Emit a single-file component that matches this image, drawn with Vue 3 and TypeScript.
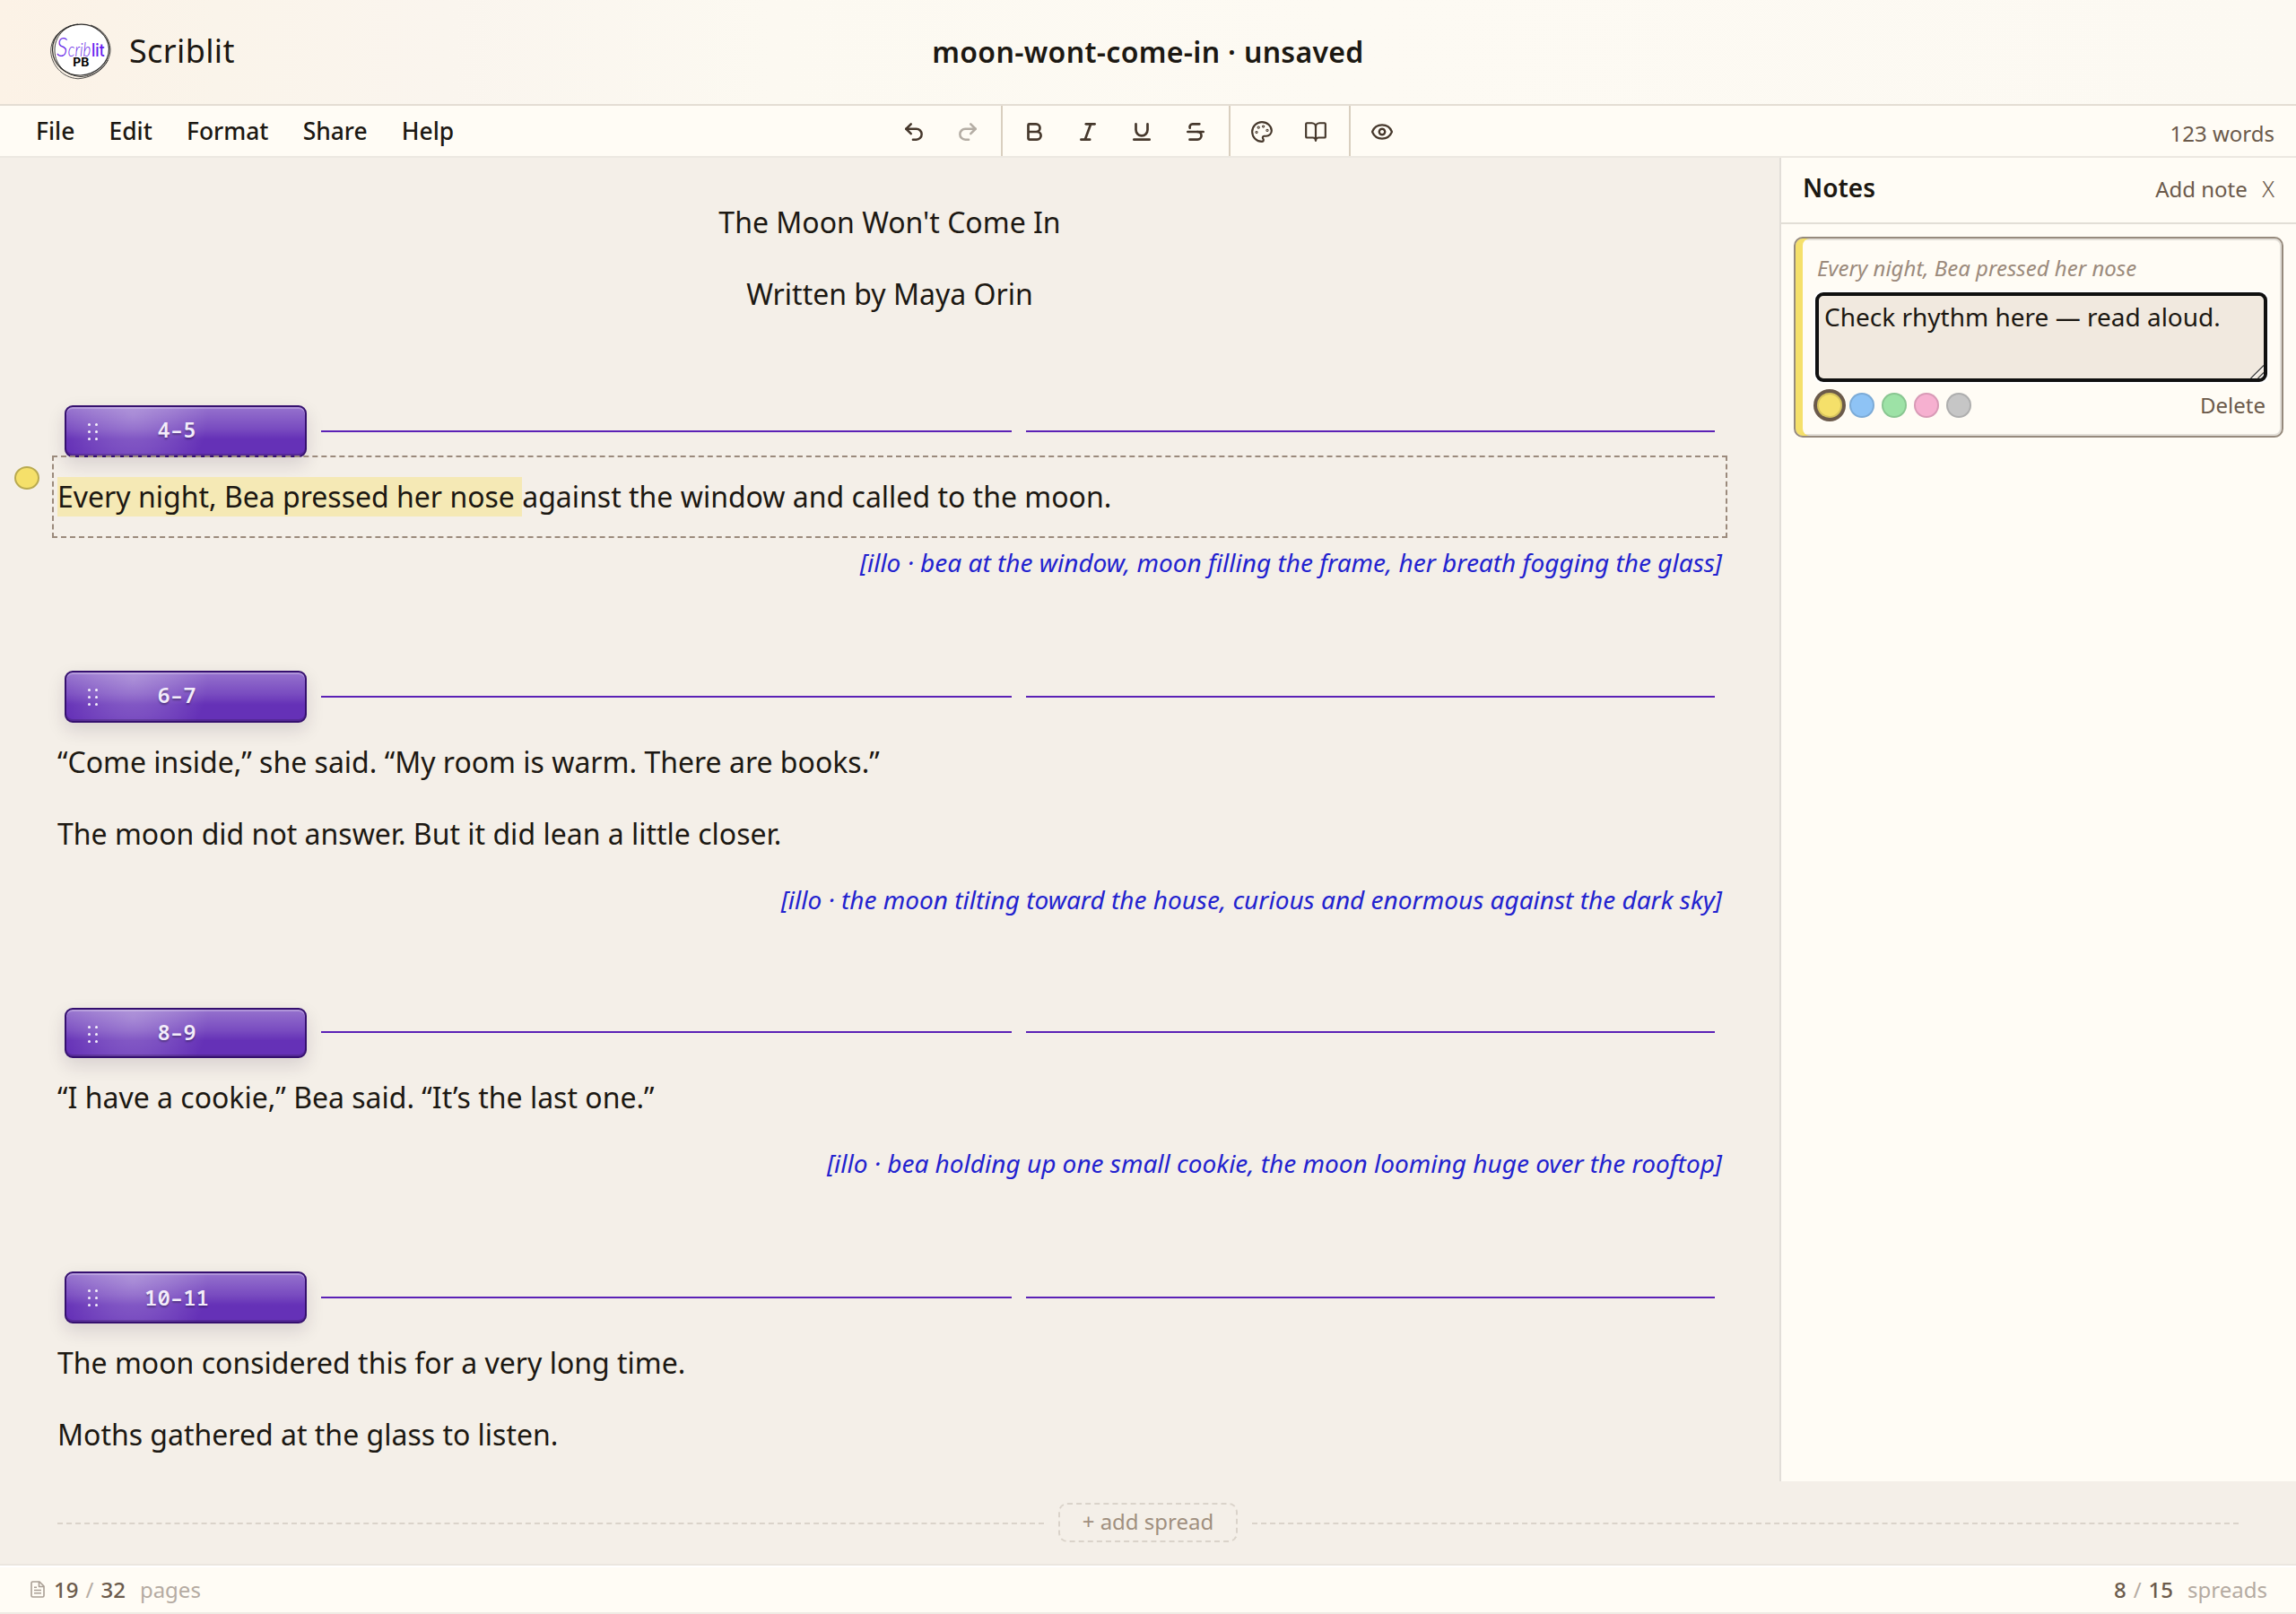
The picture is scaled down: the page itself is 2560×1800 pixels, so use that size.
<script setup lang="ts">
interface Spread {
  pages: string
  kind: string
  paragraphs: { mark?: string; text: string; active?: boolean }[]
  illo?: string
}

const menus: string[] = ['File', 'Edit', 'Format', 'Share', 'Help']

const tools = [
  {
    weight: 2.3,
    items: [
      { name: 'Undo', off: false, paths: ['M9 14 4 9l5-5', 'M4 9h10.5a5.5 5.5 0 0 1 0 11H11'] },
      { name: 'Redo', off: true, paths: ['m15 14 5-5-5-5', 'M20 9H9.5a5.5 5.5 0 0 0 0 11H13'] },
    ],
  },
  {
    weight: 2.5,
    items: [
      { name: 'Bold', off: false, paths: ['M6 12h9a4 4 0 0 1 0 8H7a1 1 0 0 1-1-1V5a1 1 0 0 1 1-1h7a4 4 0 0 1 0 8'] },
      { name: 'Italic', off: false, paths: ['M19 4h-9', 'M14 20H5', 'M15 4 9 20'] },
      { name: 'Underline', off: false, paths: ['M6 4v6a6 6 0 0 0 12 0V4', 'M4 20h16'] },
      { name: 'Strikethrough', off: false, paths: ['M16 4H9a3 3 0 0 0-2.83 4', 'M14 12a4 4 0 0 1 0 8H6', 'M4 12h16'] },
    ],
  },
  {
    weight: 2,
    items: [
      {
        name: 'Theme',
        off: false,
        paths: [
          'M12 2C6.5 2 2 6.5 2 12s4.5 10 10 10c.926 0 1.648-.746 1.648-1.688 0-.437-.18-.835-.437-1.125-.29-.289-.438-.652-.438-1.125a1.64 1.64 0 0 1 1.668-1.668h1.996c3.051 0 5.555-2.503 5.555-5.554C21.965 6.012 17.461 2 12 2z',
          'M13.5 6a.5.5 0 1 0 .01 0zM17.5 10a.5.5 0 1 0 .01 0zM8.5 7a.5.5 0 1 0 .01 0zM6.5 12a.5.5 0 1 0 .01 0z',
        ],
      },
      {
        name: 'Book view',
        off: false,
        paths: [
          'M12 7v14',
          'M3 18a1 1 0 0 1-1-1V4a1 1 0 0 1 1-1h5a4 4 0 0 1 4 4 4 4 0 0 1 4-4h5a1 1 0 0 1 1 1v13a1 1 0 0 1-1 1h-6a3 3 0 0 0-3 3 3 3 0 0 0-3-3z',
        ],
      },
    ],
  },
  {
    weight: 2.2,
    items: [
      {
        name: 'Preview',
        off: false,
        paths: [
          'M2.062 12.348a1 1 0 0 1 0-.696 10.75 10.75 0 0 1 19.876 0 1 1 0 0 1 0 .696 10.75 10.75 0 0 1-19.876 0',
          'M12 9a3 3 0 1 0 .01 0z',
        ],
      },
    ],
  },
]

const spreads: Spread[] = [
  {
    pages: '4–5',
    kind: 'single',
    paragraphs: [
      {
        mark: 'Every night, Bea pressed her nose ',
        text: 'against the window and called to the moon.',
        active: true,
      },
    ],
    illo: '[illo · bea at the window, moon filling the frame, her breath fogging the glass]',
  },
  {
    pages: '6–7',
    kind: 'double',
    paragraphs: [
      { text: '“Come inside,” she said. “My room is warm. There are books.”' },
      { text: 'The moon did not answer. But it did lean a little closer.' },
    ],
    illo: '[illo · the moon tilting toward the house, curious and enormous against the dark sky]',
  },
  {
    pages: '8–9',
    kind: 'single tight',
    paragraphs: [{ text: '“I have a cookie,” Bea said. “It’s the last one.”' }],
    illo: '[illo · bea holding up one small cookie, the moon looming huge over the rooftop]',
  },
  {
    pages: '10–11',
    kind: 'last',
    paragraphs: [
      { text: 'The moon considered this for a very long time.' },
      { text: 'Moths gathered at the glass to listen.' },
    ],
  },
]

const swatches: string[] = ['yellow', 'blue', 'green', 'pink', 'gray']
</script>

<template>
  <div class="app">
    <header class="top">
      <div class="brand">
        <svg class="logo" viewBox="0 0 72 66" width="72" height="66">
          <ellipse cx="37.8" cy="32" rx="30.5" ry="28" fill="#fff" />
          <g fill="none" stroke="#2b2b2b">
            <path stroke-width="1.2" d="M38 3.2C54 3.500 68 15.500 68.500 30.500 68.500 47 54 59 37 60 20 60.500 6 48 5.500 32 5 16 19 3 38 3.200Z" />
            <path stroke-width=".9" d="M34 3C20 4.500 7.500 16 8 33 8.500 49 21 60.500 37 61.500 55 61 70 47 70 31 69.500 19 61 8 48 4" />
            <path stroke-width=".8" d="M26 5C12 10 3.200 20 3.700 34 4.500 47 15 62.500 34 63.800 47 63 61 56 67.500 43" />
          </g>
          <text class="cap" x="10" y="38.500" textLength="12.500" lengthAdjust="spacingAndGlyphs">S</text>
          <text class="script" x="22.800" y="38.500" textLength="25.500" lengthAdjust="spacingAndGlyphs">crib</text>
          <text class="lit" x="49" y="38.500" textLength="14.500" lengthAdjust="spacingAndGlyphs">lit</text>
          <text class="pb" x="28.300" y="50" textLength="18" lengthAdjust="spacingAndGlyphs">PB</text>
        </svg>
        <span class="name">Scriblit</span>
      </div>
      <h1 class="doc-title">moon-wont-come-in · unsaved</h1>
      <div class="top-end"></div>
    </header>

    <nav class="bar">
      <div class="menus">
        <span v-for="m in menus" :key="m">{{ m }}</span>
      </div>
      <div class="tools">
        <div v-for="(group, i) in tools" :key="i" class="group">
          <span v-for="t in group.items" :key="t.name" class="tool" :class="{ off: t.off }">
            <svg viewBox="0 0 24 24" width="26" height="26" :stroke-width="group.weight">
              <path v-for="p in t.paths" :key="p" :d="p" />
            </svg>
          </span>
        </div>
      </div>
      <div class="count">123 words</div>
    </nav>

    <div class="body">
      <main class="editor">
        <p class="front">The Moon Won't Come In</p>
        <p class="front">Written by Maya Orin</p>
        <section v-for="s in spreads" :key="s.pages" class="spread" :class="s.kind">
          <div class="divider">
            <div class="pill">
              <span class="grip"><i v-for="n in 6" :key="n"></i></span>
              <span class="pages">{{ s.pages }}</span>
            </div>
            <span class="rule"></span>
            <span class="rule end"></span>
          </div>
          <div v-for="p in s.paragraphs" :key="p.text" class="para" :class="{ active: p.active }">
            <span v-if="p.active" class="note-dot"></span>
            <p><mark v-if="p.mark">{{ p.mark }}</mark>{{ p.text }}</p>
          </div>
          <p v-if="s.illo" class="illo">{{ s.illo }}</p>
        </section>
      </main>

      <aside class="notes">
        <div class="notes-head">
          <h2>Notes</h2>
          <span class="add">Add note</span>
          <span class="close">X</span>
        </div>
        <div class="card">
          <div class="quote">Every night, Bea pressed her nose</div>
          <div class="field">
            Check rhythm here — read aloud.
            <svg class="handle" width="15" height="15" viewBox="0 0 15 15">
              <path d="M2 15 15 2M10 15l5-5" fill="none" stroke="#fff" stroke-width="2.500" opacity=".6" />
              <path d="M.5 15 15 .5M8.500 15 15 8.500" fill="none" stroke="#444" stroke-width="1.300" />
            </svg>
          </div>
          <div class="card-foot">
            <span v-for="(c, i) in swatches" :key="c" class="swatch" :class="[c, { on: i === 0 }]"></span>
            <span class="delete">Delete</span>
          </div>
        </div>
      </aside>
    </div>

    <div class="add-row">
      <span class="dash"></span>
      <span class="add-spread">+ add spread</span>
      <span class="dash"></span>
    </div>

    <footer class="status">
      <svg class="doc" viewBox="0 0 16 19" width="16" height="19">
        <path d="M10 1H2.500A1.500 1.500 0 0 0 1 2.500v14A1.500 1.500 0 0 0 2.500 18h11a1.500 1.500 0 0 0 1.500-1.500V6zM9.500 1v5.500H15M4 7.200h3M4 10.500h8M4 13.800h8" />
      </svg>
      <b>19</b><span class="slash">/</span><b>32</b><span class="unit">pages</span>
      <span class="grow"></span>
      <b>8</b><span class="slash">/</span><b>15</b><span class="unit">spreads</span>
    </footer>
  </div>
</template>

<style>
body {
  background: #f4efe8;
}
</style>

<style scoped>
* {
  box-sizing: border-box;
}
p, h1, h2 {
  margin: 0;
}
.app {
  width: 2560px;
  height: 1800px;
  display: flex;
  flex-direction: column;
  overflow: hidden;
  background: #f4efe8;
  color: #1c1812;
  font-family: "Noto Sans", "Liberation Sans", sans-serif;
}
.top {
  height: 118px;
  flex: none;
  display: grid;
  grid-template-columns: 1fr auto 1fr;
  align-items: center;
  border-bottom: 2px solid #e4ddd3;
  background: linear-gradient(90deg, #fcf2e6 0, #faf4ea 240px, #faf5ee 500px, #fcf9f1 860px, #fdfaf3 1500px, #fcf9f2 100%);
}
.brand {
  display: flex;
  align-items: center;
  padding: 0 0 2px 53px;
}
.logo {
  margin-right: 19px;
}
.cap {
  font: italic 300 30px Lato, sans-serif;
  fill: #6a2be8;
}
.script {
  font: italic 300 22px Lato, sans-serif;
  fill: #6a2be8;
}
.lit {
  font: 500 20px Inter, sans-serif;
  fill: #6420f0;
}
.pb {
  font: 700 12.5px Inter, sans-serif;
  fill: #050505;
}
.name {
  font-size: 36px;
  line-height: 50px;
  letter-spacing: 0.01em;
}
.doc-title {
  font-size: 32px;
  font-weight: 600;
  line-height: 44px;
  letter-spacing: 0.01em;
}
.bar {
  height: 58px;
  flex: none;
  display: grid;
  grid-template-columns: 989px auto 1fr;
  grid-template-rows: 56px;
  border-bottom: 2px solid #ece8e1;
  background: #fffcf5;
}
.menus {
  display: flex;
  align-items: center;
  padding-left: 40px;
  gap: 38.2px;
  font-size: 26.4px;
  font-weight: 500;
  line-height: 56px;
}
.tools {
  display: flex;
}
.group {
  display: flex;
  padding: 0 7px 0 5px;
  border-right: 2px solid #d9cfbf;
}
.group:first-child {
  padding-left: 0;
}
.group:last-child {
  border-right: 0;
}
.tool {
  width: 60px;
  display: flex;
  align-items: center;
  justify-content: center;
  padding-top: 2px;
}
.tool svg {
  fill: none;
  stroke: #46382c;
  stroke-linecap: round;
  stroke-linejoin: round;
}
.tool.off {
  opacity: 0.4;
}
.count {
  text-align: right;
  padding-right: 24px;
  font-size: 24px;
  line-height: 61px;
  color: #6b5a4b;
}
.body {
  height: 1476px;
  flex: none;
  display: flex;
}
.editor {
  width: 1984px;
  flex: none;
  padding: 32px 64px 0;
  overflow: hidden;
}
.front {
  height: 80px;
  font-size: 32px;
  line-height: 79px;
  text-align: center;
}
.spread {
  height: 296px;
  margin: 0 -6px;
}
.front + .spread {
  margin-top: 84px;
}
.spread.double {
  height: 374px;
}
.divider {
  height: 58px;
  display: flex;
  align-items: center;
  gap: 16px;
  padding: 0 14px;
}
.pill {
  width: 270px;
  height: 58px;
  display: flex;
  align-items: flex-start;
  padding-left: 24px;
  border: 2px solid #35106f;
  border-radius: 9px;
  background:
    radial-gradient(circle at 28% 16%, rgba(255, 255, 255, 0.26), rgba(255, 255, 255, 0.14) 42px, rgba(255, 255, 255, 0) 84px),
    linear-gradient(180deg, rgba(255, 255, 255, 0.34), rgba(255, 255, 255, 0.16) 45%, rgba(255, 255, 255, 0.04) 66%, rgba(255, 255, 255, 0.04)),
    #5f29b4;
  box-shadow:
    inset 0 2px 0 rgba(255, 255, 255, 0.25),
    inset 0 -2px 0 rgba(40, 20, 60, 0.25),
    0 8px 20px rgba(40, 20, 60, 0.14);
}
.tight .pill {
  height: 56px;
  margin-top: 2px;
}
.grip {
  width: 12px;
  margin-top: 18px;
  display: grid;
  grid-template-columns: 3px 3px;
  gap: 5px;
}
.grip i {
  width: 3px;
  height: 3px;
  border-radius: 50%;
  background: rgba(255, 255, 255, 0.92);
}
.pages {
  width: 174px;
  text-align: center;
  font: 600 24px/49px "Noto Sans Mono", "DejaVu Sans Mono", monospace;
  color: #f3edfa;
  text-shadow: 0 2px 2px rgba(0, 0, 0, 0.3);
}
.last .pages {
  padding-top: 2px;
}
.rule {
  flex: 1;
  height: 2px;
  background: #5b21b6;
}
.rule.end {
  flex: 0 0 768px;
}
.para {
  height: 80px;
  padding: 0 6px;
  font-size: 32px;
  line-height: 79px;
  position: relative;
}
.divider + .para {
  margin-top: 4px;
}
.divider + .para.active {
  height: 92px;
  margin-top: -2px;
  border: 2px dashed #9b8a7c;
  padding: 0 4px;
  line-height: 87px;
}
.note-dot {
  position: absolute;
  left: -44px;
  top: 10px;
  width: 28px;
  height: 26px;
  border: 2px solid #b9aa50;
  border-radius: 50%;
  background: #f5e06a;
}
mark {
  padding-bottom: 1px;
  background: #f5e9b5;
  color: inherit;
}
.illo {
  padding-right: 6px;
  text-align: right;
  font-size: 28px;
  font-style: italic;
  line-height: 66px;
  color: #2222cf;
}
.active + .illo {
  line-height: 54px;
}
.notes {
  flex: 1;
  border-left: 2px solid #e2ded8;
  background: #fffcf5;
}
.notes-head {
  height: 74px;
  display: flex;
  align-items: flex-start;
  padding: 0 24px;
  border-bottom: 2px solid #e2ded6;
  font-size: 24px;
  line-height: 69px;
  color: #6b5a4b;
}
.notes-head h2 {
  flex: 1;
  font-size: 28px;
  font-weight: 600;
  line-height: 66px;
  color: #1c1812;
}
.close {
  margin-left: 16.5px;
  font-size: 25px;
  font-weight: 300;
}
.card {
  width: 546px;
  height: 224px;
  margin: 14px 0 0 14px;
  padding: 12px 16px 0 22px;
  border: 2px solid #968a7d;
  border-radius: 10px;
  box-shadow: inset 8px 0 0 #f5e06a, inset 0 0 0 2px #e3dfd8;
}
.quote {
  padding-left: 2px;
  font-size: 24px;
  font-style: italic;
  line-height: 42px;
  color: #9b8a7c;
}
.field {
  height: 100px;
  margin-top: 6px;
  padding: 5px 6px;
  border: 4px solid #101010;
  border-radius: 9px;
  box-shadow: 0 0 0 2px #fff;
  background: #f1e9df;
  font-size: 28px;
  line-height: 36px;
  position: relative;
}
.handle {
  position: absolute;
  right: 0;
  bottom: 0;
}
.card-foot {
  display: flex;
  align-items: center;
  gap: 8px;
  height: 52px;
  padding: 0 2px;
}
.swatch {
  width: 28px;
  height: 28px;
  border: 2px solid rgba(0, 0, 0, 0.12);
  border-radius: 50%;
}
.swatch.on {
  box-shadow: 0 0 0 4px #6b5a4b;
}
.yellow { background: #f5e06a; }
.blue { background: #8ec3f5; }
.green { background: #9de2a6; }
.pink { background: #f6b0d0; }
.gray { background: #c6c6c6; }
.delete {
  margin-left: auto;
  font-size: 24px;
  line-height: 50px;
  color: #6b5a4b;
}
.add-row {
  height: 92px;
  flex: none;
  display: flex;
  align-items: center;
  gap: 16px;
  padding: 0 64px;
}
.dash {
  flex: 1;
  margin-top: 2px;
  border-top: 2px dashed #dad3ca;
}
.add-spread {
  width: 200px;
  height: 44px;
  border: 2px dashed #dad3ca;
  border-radius: 10px;
  font-size: 24px;
  line-height: 37px;
  text-align: center;
  color: #a08f7f;
}
.status {
  height: 56px;
  flex: none;
  display: flex;
  align-items: flex-start;
  padding: 1px 32px 0 34px;
  border-top: 2px solid #ebe6df;
  border-bottom: 2px solid #efebe4;
  background: #fffcf5;
  box-shadow: inset 0 2px 0 #fff;
  font-size: 24px;
  line-height: 51px;
  color: #b5aba2;
}
.status b {
  font-weight: 500;
  color: #6b5a4b;
}
.doc {
  margin: 16px 10px 0 0;
  fill: none;
  stroke: #a99e94;
  stroke-width: 1.6;
  stroke-linejoin: round;
}
.slash {
  margin: 0 8px;
}
.unit {
  margin-left: 16px;
}
.grow {
  flex: 1;
}
</style>
